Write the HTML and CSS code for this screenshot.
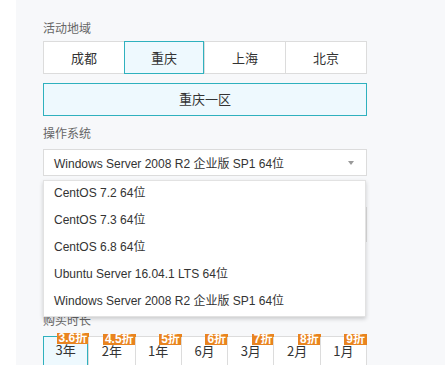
FILE: index.html
```html
<!DOCTYPE html>
<html lang="zh">
<head>
<meta charset="utf-8">
<link rel="stylesheet" href="styles.css">
</head>
<body>
<div class="page">
  <div class="panel">
    <div class="label">活动地域</div>
    <div class="seg">
      <div class="seg-item">成都</div>
      <div class="seg-item active">重庆</div>
      <div class="seg-item">上海</div>
      <div class="seg-item">北京</div>
    </div>
    <div class="zone">重庆一区</div>
    <div class="label label-os">操作系统</div>
    <div class="select-wrap">
      <div class="select">
        <span>Windows Server 2008 R2 企业版 SP1 64位</span>
        <span class="arrow"></span>
      </div>
      <ul class="menu">
        <li>CentOS 7.2 64位</li>
        <li>CentOS 7.3 64位</li>
        <li>CentOS 6.8 64位</li>
        <li>Ubuntu Server 16.04.1 LTS 64位</li>
        <li>Windows Server 2008 R2 企业版 SP1 64位</li>
      </ul>
    </div>
    <div class="hidden-box"></div>
    <div class="label label-time">购买时长</div>
    <div class="dur">
      <div class="dur-item active"><span class="badge">3.6折</span>3年</div>
      <div class="dur-item"><span class="badge">4.5折</span>2年</div>
      <div class="dur-item"><span class="badge">5折</span>1年</div>
      <div class="dur-item"><span class="badge">6折</span>6月</div>
      <div class="dur-item"><span class="badge">7折</span>3月</div>
      <div class="dur-item"><span class="badge">8折</span>2月</div>
      <div class="dur-item"><span class="badge">9折</span>1月</div>
    </div>
  </div>
</div>
</body>
</html>
```
FILE: styles.css
```css
* { box-sizing: border-box; }
html, body {
  margin: 0;
  padding: 0;
  background: #ffffff;
  font-family: "Liberation Sans", "Noto Sans CJK SC", sans-serif;
  color: #333;
}
.page {
  padding-left: 16px;
  height: 365px;
  overflow: hidden;
}
.panel {
  background: #f7f8fa;
  height: 365px;
  padding: 19px 0 0 27px;
}
.label {
  width: 324px;
  font-size: 12px;
  line-height: 18px;
  color: #666;
  font-family: "Noto Sans CJK SC", sans-serif;
}
.seg {
  margin-top: 4px;
  display: flex;
  width: 324px;
  height: 33px;
  background: #fff;
  border: 1px solid #dcdcdc;
}
.seg-item {
  flex: 1;
  display: flex;
  align-items: center;
  justify-content: center;
  font-size: 13px;
  font-family: "Noto Sans CJK SC", sans-serif;
  color: #333;
  border-left: 1px solid #dcdcdc;
}
.seg-item:first-child { border-left: none; }
.seg-item.active {
  background: #eef9fe;
  outline: 1px solid #2fb1be;
  outline-offset: -1px;
  margin: -1px 0;
  border-left: none;
}
.zone {
  margin-top: 9px;
  width: 324px;
  height: 33px;
  border: 1px solid #2fb1be;
  background: #eef9fe;
  display: flex;
  align-items: center;
  justify-content: center;
  padding-bottom: 2px;
  font-size: 13px;
  font-family: "Noto Sans CJK SC", sans-serif;
}
.label-os { margin-top: 8px; }
.select-wrap {
  position: relative;
  width: 324px;
  margin-top: 7px;
}
.select {
  height: 27px;
  background: #fff;
  border: 1px solid #dcdcdc;
  display: flex;
  align-items: center;
  justify-content: space-between;
  padding: 0 12px 0 10px;
  font-size: 12px;
}
.arrow {
  width: 0;
  height: 0;
  border-left: 3.5px solid transparent;
  border-right: 3.5px solid transparent;
  border-top: 4px solid #9a9a9a;
}
.menu {
  position: absolute;
  z-index: 5;
  left: 0;
  top: 31px;
  width: 323px;
  margin: 0;
  padding: 0;
  list-style: none;
  background: #fff;
  border: 1px solid #e2e2e2;
  box-shadow: 0 2px 4px rgba(0, 0, 0, 0.18);
}
.menu li {
  height: 27px;
  line-height: 25px;
  padding-left: 10px;
  font-size: 12px;
  color: #333;
}
.hidden-box {
  margin-top: 31px;
  width: 324px;
  height: 35px;
  background: #fff;
  border: 1px solid #dcdcdc;
}
.label-time { margin-top: 69px; }
.dur {
  margin-top: 7px;
  display: flex;
  width: 324px;
  height: 33px;
  background: #fff;
  border: 1px solid #dcdcdc;
}
.dur-item {
  position: relative;
  flex: 1;
  text-align: center;
  font-size: 13px;
  line-height: 28px;
  font-family: "Noto Sans CJK SC", sans-serif;
  color: #333;
  border-left: 1px solid #dcdcdc;
}
.dur-item:first-child { border-left: none; }
.dur-item.active {
  background: #eef9fe;
  outline: 1px solid #2fb1be;
  outline-offset: -1px;
  margin: -1px 0 -1px -1px;
}
.badge {
  position: absolute;
  top: -3px;
  right: -1px;
  height: 11px;
  line-height: 11px;
  padding: 0 2px;
  background: #e9841f;
  color: #fff;
  font-size: 12px;
  font-weight: bold;
  font-family: "Liberation Sans", "Noto Sans CJK SC", sans-serif;
  overflow: hidden;
}
```
